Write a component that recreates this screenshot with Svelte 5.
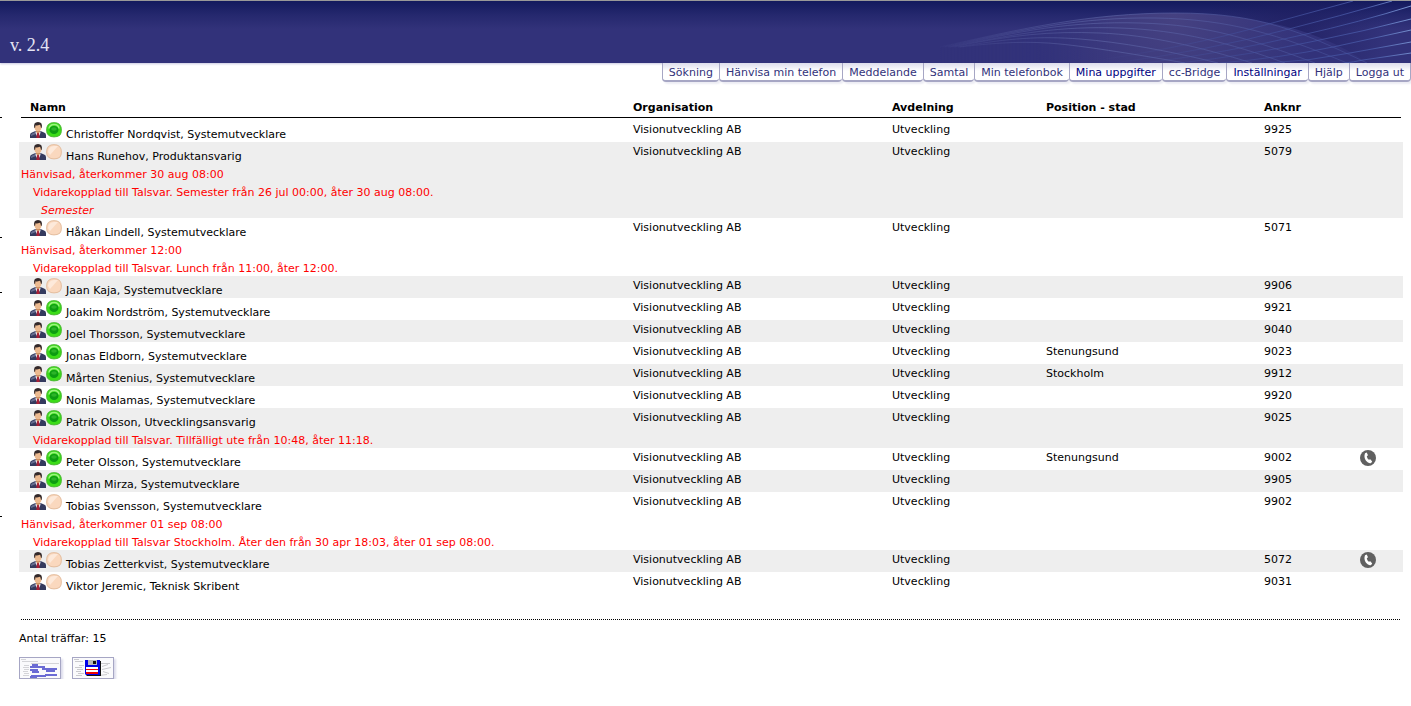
<script>
    const menu = [
        { label: 'Sökning' },
        { label: 'Hänvisa min telefon' },
        { label: 'Meddelande' },
        { label: 'Samtal' },
        { label: 'Min telefonbok' },
        { label: 'Mina uppgifter', strong: true },
        { label: 'cc-Bridge' },
        { label: 'Inställningar', strong: true },
        { label: 'Hjälp' },
        { label: 'Logga ut' }
    ];

    const people = [
        { name: 'Christoffer Nordqvist', title: 'Systemutvecklare', ext: '9925', online: true },
        {
            name: 'Hans Runehov', title: 'Produktansvarig', ext: '5079',
            referral: 'Hänvisad, återkommer 30 aug 08:00',
            forward: 'Vidarekopplad till Talsvar. Semester från 26 jul 00:00, åter 30 aug 08:00.',
            note: 'Semester'
        },
        {
            name: 'Håkan Lindell', title: 'Systemutvecklare', ext: '5071',
            referral: 'Hänvisad, återkommer 12:00',
            forward: 'Vidarekopplad till Talsvar. Lunch från 11:00, åter 12:00.'
        },
        { name: 'Jaan Kaja', title: 'Systemutvecklare', ext: '9906' },
        { name: 'Joakim Nordström', title: 'Systemutvecklare', ext: '9921', online: true },
        { name: 'Joel Thorsson', title: 'Systemutvecklare', ext: '9040', online: true },
        { name: 'Jonas Eldborn', title: 'Systemutvecklare', ext: '9023', online: true, city: 'Stenungsund' },
        { name: 'Mårten Stenius', title: 'Systemutvecklare', ext: '9912', online: true, city: 'Stockholm' },
        { name: 'Nonis Malamas', title: 'Systemutvecklare', ext: '9920', online: true },
        {
            name: 'Patrik Olsson', title: 'Utvecklingsansvarig', ext: '9025', online: true,
            forward: 'Vidarekopplad till Talsvar. Tillfälligt ute från 10:48, åter 11:18.'
        },
        { name: 'Peter Olsson', title: 'Systemutvecklare', ext: '9002', online: true, city: 'Stenungsund', busy: true },
        { name: 'Rehan Mirza', title: 'Systemutvecklare', ext: '9905', online: true },
        {
            name: 'Tobias Svensson', title: 'Systemutvecklare', ext: '9902',
            referral: 'Hänvisad, återkommer 01 sep 08:00',
            forward: 'Vidarekopplad till Talsvar Stockholm. Åter den från 30 apr 18:03, åter 01 sep 08:00.'
        },
        { name: 'Tobias Zetterkvist', title: 'Systemutvecklare', ext: '5072', busy: true },
        { name: 'Viktor Jeremic', title: 'Teknisk Skribent', ext: '9031' }
    ];

    // Curves in the banner, fanning out from the left
    const arcs = [
        'M40 46 C120 28 190 12 275 12 S400 30 467 62',
        'M44 46 C120 29 180 16 255 17 S380 34 447 62',
        'M48 46 C120 30 170 20 240 22 S350 38 415 62',
        'M50 46 C120 32 160 25 220 27 S330 42 385 62',
        'M54 46 C110 34 150 30 200 32 S300 46 352 62',
        'M58 46 C110 37 140 35 180 38 S270 50 318 62',
        'M60 46 C100 41 130 40 160 43 S240 54 285 62'
    ];
    // Rays rising towards the upper right corner
    const rays = [
        'M180 62 Q290 46 365 24 L453 0',
        'M215 62 Q310 49 385 29 Q440 15 492 0',
        'M245 62 Q330 51 402 34 Q460 21 511 5',
        'M280 62 Q350 54 415 40 Q465 30 511 18',
        'M320 62 Q380 57 433 46 L511 29',
        'M370 62 Q410 60 450 52 L511 41',
        'M420 64 Q445 63 463 59 L511 52'
    ];
</script>

<header>
    <span class="version">v. 2.4</span>
    <svg class="swoosh" width="511" height="62" viewBox="0 0 511 62" aria-hidden="true">
        <defs>
            <linearGradient id="arc" gradientUnits="userSpaceOnUse" x1="30" y1="0" x2="467" y2="0">
                <stop offset="0" stop-color="#6a74b4" stop-opacity="0" />
                <stop offset=".4" stop-color="#6068a8" stop-opacity=".6" />
                <stop offset="1" stop-color="#434d98" stop-opacity=".6" />
            </linearGradient>
            <linearGradient id="ray" gradientUnits="userSpaceOnUse" x1="200" y1="62" x2="511" y2="0">
                <stop offset="0" stop-color="#4a5aa8" stop-opacity="0" />
                <stop offset=".45" stop-color="#4352a0" stop-opacity=".5" />
                <stop offset=".85" stop-color="#4656a4" stop-opacity=".9" />
                <stop offset="1" stop-color="#7f9bd8" />
            </linearGradient>
            <radialGradient id="glow" gradientUnits="userSpaceOnUse" cx="275" cy="20" r="140">
                <stop offset="0" stop-color="#454181" />
                <stop offset="1" stop-color="#32327a" />
            </radialGradient>
            <linearGradient id="edge" gradientUnits="userSpaceOnUse" x1="40" y1="0" x2="467" y2="0">
                <stop offset="0" stop-color="#fff" stop-opacity="0" />
                <stop offset=".4" stop-color="#fff" />
            </linearGradient>
            <mask id="soft">
                <path d="M40 46 C120 28 190 12 275 12 S400 30 467 62 H40z" fill="url(#edge)" />
            </mask>
            <radialGradient id="shade" gradientUnits="userSpaceOnUse" cx="395" cy="32" r="90">
                <stop offset="0" stop-color="#1d1d5e" stop-opacity=".7" />
                <stop offset="1" stop-color="#1d1d5e" stop-opacity="0" />
            </radialGradient>
        </defs>
        <path d="M275 12 Q400 14 467 62 H511 V0 H300z" fill="url(#shade)" />
        <rect width="511" height="62" fill="url(#glow)" mask="url(#soft)" />
        {#each arcs as d}
            <path {d} fill="none" stroke="url(#arc)" />
        {/each}
        {#each rays as d}
            <path {d} fill="none" stroke="url(#ray)" />
        {/each}
    </svg>
</header>

<nav>
    {#each menu as item}
        <a href="#top" class:strong={item.strong}>{item.label}</a>
    {/each}
</nav>

<div class="page">
    <div class="gutter" aria-hidden="true">
        <i class="tick"></i>
        <i class="tick far"></i>
        <i class="tick near"></i>
        <i class="tick last"></i>
    </div>

    <main>
        <table>
            <colgroup>
                <col />
                <col class="c-org" />
                <col class="c-dep" />
                <col class="c-pos" />
                <col class="c-ext" />
                <col class="c-state" />
            </colgroup>
            <thead>
                <tr>
                    <th class="name">Namn</th>
                    <th>Organisation</th>
                    <th>Avdelning</th>
                    <th>Position - stad</th>
                    <th>Anknr</th>
                    <th></th>
                </tr>
                <tr>
                    <td class="rule" colspan="6"><hr /></td>
                </tr>
            </thead>
            {#each people as p, i}
                <tbody class:odd={i % 2 === 1}>
                    <tr>
                        <td class="name">
                            <div class="person">
                                <svg width="16" height="16" viewBox="0 0 16 16" aria-hidden="true">
                                    <path d="M0 16V13Q0 10.800 2.500 10.200L5.500 9h5l3 1.200Q16 10.800 16 13v3z" fill="#343a5e" />
                                    <path d="M1 14V13Q1.200 11.500 3 11L5.500 10 6 12z" fill="#666d90" />
                                    <path d="M5.300 9.500h5.400L9.800 13 8 15 6.200 13z" fill="#f0f0f6" />
                                    <path d="M7 11h2l.7 5H6.300z" fill="#a82036" />
                                    <path d="M6 7.500h4V10L8 11.500 6 10z" fill="#c98a5c" />
                                    <ellipse cx="8" cy="5.300" rx="3.500" ry="3.900" fill="#ecba90" />
                                    <path d="M4.300 6Q3 0 8 0t3.700 6l-.9-.6Q10.800 3.500 9.800 2.800 7 3.800 5.400 3.200L5.200 5.400z" fill="#33292a" />
                                </svg>
                                <svg width="16" height="16" viewBox="0 0 16 16" aria-hidden="true">
                                    {#if p.online}
                                        <path d="M5 1Q8 .3 11 1T15 5Q15.700 8 15 11T11 14.500Q8 15.300 5 14.500T1 11Q.300 8 1 5T5 1z" fill="#3bdc18" stroke="#4cba34" />
                                        <path d="M3 6.500Q3.500 2.600 8 2.500T13 6.500" fill="none" stroke="#9cf480" stroke-width="1.500" />
                                        <ellipse cx="8" cy="8" rx="4.500" ry="4" fill="#0c9c12" />
                                        <ellipse cx="8" cy="7" rx="2.800" ry="1.800" fill="#2cb428" />
                                    {:else}
                                        <path d="M5 1Q8 .3 11 1T15 5Q15.700 8 15 11T11 14.500Q8 15.300 5 14.500T1 11Q.300 8 1 5T5 1z" fill="#fad8be" stroke="#e4bd9e" />
                                        <path d="M2 8Q2.500 2.500 8 2h4L4 11z" fill="#fde9da" />
                                    {/if}
                                </svg>
                                <span>{p.name}, {p.title}</span>
                            </div>
                        </td>
                        <td>Visionutveckling AB</td>
                        <td>Utveckling</td>
                        <td>{p.city ?? ''}</td>
                        <td>{p.ext}</td>
                        <td class="state">
                            {#if p.busy}
                                <svg width="16" height="16" viewBox="0 0 16 16" role="img" aria-label="Upptagen">
                                    <circle cx="8" cy="8" r="8" fill="#606060" />
                                    <path d="M5 3.200l1.700-.6 1.300 2.700-1.200 1Q7 8.500 8.800 9.800l1.500-.6 1.900 2.200-1.100 1.600Q8.500 13.900 6 10.800 3.500 7 5 3.200z" fill="#fff" />
                                </svg>
                            {/if}
                        </td>
                    </tr>
                    {#if p.referral}
                        <tr><td class="info" colspan="6">{p.referral}</td></tr>
                    {/if}
                    {#if p.forward}
                        <tr><td class="info forward" colspan="6">{p.forward}</td></tr>
                    {/if}
                    {#if p.note}
                        <tr><td class="info note" colspan="6">{p.note}</td></tr>
                    {/if}
                </tbody>
            {/each}
        </table>

        <hr class="dotted" />
        <p>Antal träffar: {people.length}</p>

        <div class="actions">
            <button type="button" aria-label="Visa schema">
                <svg width="40" height="20" viewBox="0 0 40 20">
                    <path d="M1 1.500h5M2 3.500h16M11 5.500h28M4 7.500h5M3 9.500h6M4 11.500h5M3 13.500h5M4 15.500h5M3 17.500h6" stroke="#d4d4d8" />
                    <path d="M12 7h6M10 9h15M22 11h15M10 12h8M26 13h9M12 14h7M25 17h12M11 18h15M10 19h7" stroke="#6b6bd4" stroke-width="2" />
                </svg>
            </button>
            <button type="button" aria-label="Spara">
                <svg width="40" height="20" viewBox="0 0 40 20">
                    <path d="M1 1.500h5M2 3.500h8M28 5.500h9M6 7.500h5M2 9.500h7M4 11.500h6M3 13.500h5M5 15.500h6M3 17.500h6M29 8.500l6-2M29 11.500l9-2M30 13.500l6 2M26 17.500l8-1" stroke="#cacace" />
                    <path d="M14 3h14v15H14l-1-1z" fill="#111" />
                    <path d="M12 2h15v15H13l-1-1z" fill="#0000e8" />
                    <path d="M15 2h9v5h-9z" fill="#b8b8b8" />
                    <path d="M20 3h3v3h-3z" fill="#111" />
                    <path d="M13 9h12v7H13z" fill="#fff" />
                    <path d="M13 11h12v1H13zM13 14h12v2H13z" fill="#e00" />
                </svg>
            </button>
        </div>
    </main>
</div>

<style>
:global(body) {
    margin: 0;
    background: #fff;
    color: #000;
    font: 11px/16px "DejaVu Sans", Verdana, sans-serif;
}

header {
    display: flex;
    justify-content: space-between;
    height: 62px;
    border-top: 1px solid #999;
    background: linear-gradient(#131a5e, #25286e 14px, #32327a 28px, #32327a);
    box-shadow: 0 1px 2px #c8c8e0;
    overflow: hidden;
}
.version {
    padding: 33px 0 0 10px;
    font: 18px/22px "Liberation Serif", serif;
    color: #e4e4f4;
}
.swoosh {
    flex: none;
}

nav {
    display: flex;
    justify-content: flex-end;
    position: relative;
}
nav a {
    box-sizing: border-box;
    height: 19px;
    padding: 2px 6px 0;
    border: solid #a6a6c4;
    border-width: 0 0 2px 1px;
    border-radius: 0 0 4px 4px;
    background: linear-gradient(#dcdcec, #fff 8px);
    box-shadow: 2px 2px 2px #ececf4;
    line-height: 15px;
    color: #32327a;
    text-decoration: none;
    white-space: nowrap;
}
nav a:last-child {
    border-right-width: 1px;
}
nav a.strong {
    color: #000080;
}

.page {
    display: flex;
}
.gutter {
    flex: none;
    width: 19px;
    padding-top: 35px;
}
.tick {
    display: block;
    width: 2px;
    height: 1px;
    background: #000;
}
.tick.far {
    margin-top: 119px;
}
.tick.near {
    margin-top: 54px;
}
.tick.last {
    margin-top: 223px;
}

main {
    flex: 1;
    padding: 17px 8px 0 0;
}
table {
    width: 100%;
    table-layout: fixed;
    border-spacing: 0;
}
.c-org {
    width: 259px;
}
.c-dep {
    width: 154px;
}
.c-pos {
    width: 218px;
}
.c-ext {
    width: 96px;
}
.c-state {
    width: 43px;
}
th {
    height: 18px;
    padding: 0;
    text-align: left;
    vertical-align: top;
    line-height: 18px;
}
td {
    padding: 2px 0 0;
    vertical-align: top;
    white-space: nowrap;
}
th.name,
td.name {
    padding-left: 11px;
}
td.rule {
    padding: 0 2px 2px;
}
hr {
    margin: 0;
    border: 0;
    border-top: 1px solid #000;
}
.odd {
    background: #eee;
}
.person {
    display: flex;
    height: 20px;
}
.person span {
    padding: 5px 0 0 4px;
}
.person svg,
.state svg {
    display: block;
    flex: none;
}
.info {
    height: 14px;
    padding: 4px 0 0 2px;
    line-height: 14px;
    color: #f00;
}
.forward {
    padding-left: 14px;
}
.note {
    padding-left: 22px;
    font-style: italic;
}

hr.dotted {
    margin: 25px 3px 0 2px;
    border-top-style: dotted;
}
p {
    margin: 11px 0 0;
}
.actions {
    display: flex;
    gap: 11px;
    margin-top: 10px;
}
.actions button {
    padding: 0;
    border: 1px solid #a6a6c4;
    background: #fafafc;
    box-shadow: 2px 2px 2px #dcdcec;
}
.actions svg {
    display: block;
}
</style>
